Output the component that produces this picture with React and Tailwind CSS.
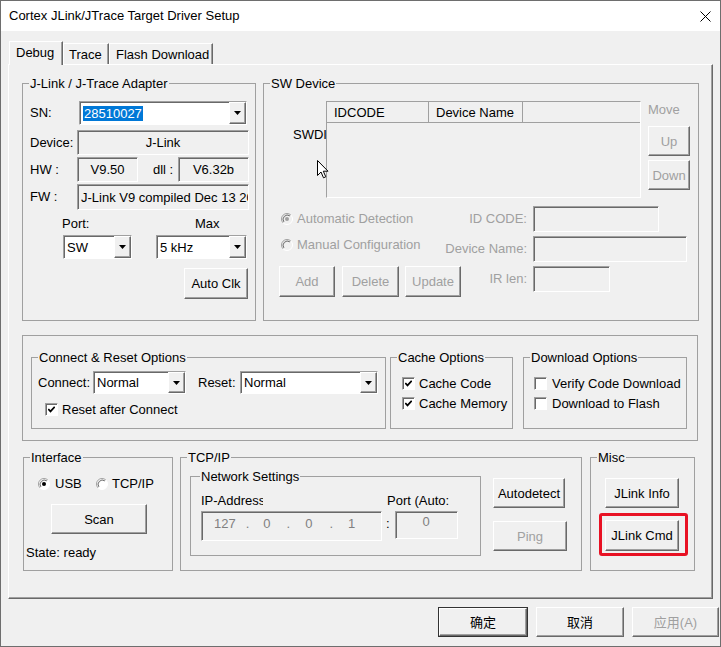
import React from "react";

const raised =
  "border border-t-white border-l-white border-r-[#696969] border-b-[#696969] shadow-[inset_-1px_-1px_0_#a0a0a0]";
const sunken =
  "border border-t-[#a0a0a0] border-l-[#a0a0a0] border-r-white border-b-white shadow-[inset_1px_1px_0_#696969]";

function Btn({ className = "", disabled, children }) {
  return (
    <div
      className={`${raised} bg-[#f0f0f0] flex items-center justify-center leading-[15px] shrink-0 ${
        disabled ? "text-[#a0a0a0]" : "text-black"
      } ${className}`}
    >
      {children}
    </div>
  );
}

function Arrow() {
  return (
    <svg width="7" height="4" viewBox="0 0 7 4">
      <path d="M0 0h7L3.5 4z" fill="#000" />
    </svg>
  );
}

function Combo({ className = "", children }) {
  return (
    <div className={`${sunken} bg-white flex items-stretch pl-[3px] shrink-0 ${className}`}>
      <div className="flex-1 flex items-center whitespace-nowrap overflow-hidden leading-[15px]">{children}</div>
      <div className={`${raised} bg-[#f0f0f0] w-[17px] flex items-center justify-center`}>
        <Arrow />
      </div>
    </div>
  );
}

function Field({ className = "", children }) {
  return <div className={`${sunken} bg-[#f0f0f0] leading-[15px] shrink-0 ${className}`}>{children}</div>;
}

function Check({ checked }) {
  return (
    <div className={`${sunken} bg-white w-[13px] h-[13px] flex items-center justify-center shrink-0`}>
      {checked && (
        <svg width="7" height="7" viewBox="0 0 7 7">
          <path d="M0.3 3l2.2 2.4L6.7 0.8" stroke="#000" strokeWidth="1.7" fill="none" />
        </svg>
      )}
    </div>
  );
}

function Radio({ checked, disabled }) {
  return (
    <svg width="12" height="12" viewBox="0 0 12 12" className="shrink-0">
      <circle cx="6" cy="6" r="5.5" fill={disabled ? "#f0f0f0" : "#fff"} />
      <path d="M2.1 9.9A5.5 5.5 0 0 1 9.9 2.1" stroke="#a0a0a0" fill="none" />
      <path d="M2.9 8.9A4.3 4.3 0 0 1 8.9 2.9" stroke="#696969" fill="none" />
      <path d="M9.9 2.1A5.5 5.5 0 0 1 2.1 9.9" stroke="#fff" fill="none" />
      {checked && <circle cx="6" cy="6" r="2" fill={disabled ? "#a0a0a0" : "#000"} />}
    </svg>
  );
}

function Group({ label, className = "", legend = "ml-[6px]", children }) {
  return (
    <fieldset className={`border border-[#a0a0a0] shrink-0 min-w-0 ${className}`}>
      <legend className={`${legend} px-[1px] leading-[15px]`}>{label}</legend>
      {children}
    </fieldset>
  );
}

function AdapterGroup() {
  return (
    <Group label="J-Link / J-Trace Adapter" className="w-[234px] h-[245px]">
      <div className="pl-[7px]">
        <div className="mt-[10px] flex items-center">
          <span className="w-[49px]">SN:</span>
          <Combo className="w-[168px] h-[24px]">
            <span className="bg-[#0078d7] text-white px-[1px]">28510027</span>
          </Combo>
        </div>
        <div className="mt-[5px] flex items-center">
          <span className="w-[47px]">Device:</span>
          <Field className="w-[172px] h-[25px] flex items-center justify-center">J-Link</Field>
        </div>
        <div className="mt-[2px] flex items-center">
          <span className="w-[47px]">HW :</span>
          <Field className="w-[61px] h-[25px] flex items-center justify-center">V9.50</Field>
          <span className="w-[40px] pl-[15px]">dll :</span>
          <Field className="w-[71px] h-[25px] flex items-center justify-center">V6.32b</Field>
        </div>
        <div className="mt-[2px] flex items-center">
          <span className="w-[47px]">FW :</span>
          <Field className="w-[172px] h-[26px] flex items-center pl-[3px] overflow-hidden whitespace-nowrap">
            J-Link V9 compiled Dec 13 2018 11:14:50
          </Field>
        </div>
        <div className="mt-[6px] flex leading-[15px]">
          <span className="ml-[32px] w-[133px]">Port:</span>
          <span>Max</span>
        </div>
        <div className="mt-[4px] flex">
          <Combo className="ml-[33px] w-[69px] h-[24px]">SW</Combo>
          <Combo className="ml-[24px] w-[91px] h-[24px]">5 kHz</Combo>
        </div>
        <Btn className="mt-[9px] ml-[154px] w-[64px] h-[31px]">Auto Clk</Btn>
      </div>
    </Group>
  );
}

function SwDeviceGroup() {
  return (
    <Group label="SW Device" className="w-[436px] h-[245px]">
      <div className="mt-[10px] flex">
        <div className="relative w-[62px] h-[97px] shrink-0">
          <div className="pl-[29px] mt-[26px] leading-[15px]">SWDI</div>
          <svg className="absolute left-[53px] top-[59px]" width="12" height="19" viewBox="0 0 12 19">
            <path d="M0.5 0.5V15.5L4 12L6.5 17.8L8.8 16.8L6.3 11.2H11Z" fill="#fff" stroke="#000" />
          </svg>
        </div>
        <div className="w-[315px] h-[97px] border border-t-[#a0a0a0] border-l-[#a0a0a0] border-r-white border-b-white bg-[#f0f0f0] shrink-0">
          <div className="flex h-[21px] border-b border-[#a0a0a0] leading-[15px]">
            <div className="w-[102px] border-r border-[#a0a0a0] pl-[7px] flex items-center">IDCODE</div>
            <div className="w-[94px] border-r border-[#a0a0a0] pl-[7px] flex items-center">Device Name</div>
            <div className="flex-1" />
          </div>
        </div>
        <div className="ml-[7px] w-[42px] flex flex-col shrink-0">
          <span className="mt-[1px] leading-[15px] text-[#a0a0a0]">Move</span>
          <Btn disabled className="mt-[9px] w-[42px] h-[30px]">Up</Btn>
          <Btn disabled className="mt-[4px] w-[42px] h-[30px]">Down</Btn>
        </div>
      </div>
      <div className="mt-[8px] flex items-center h-[26px] text-[#a0a0a0]">
        <div className="w-[265px] flex items-center">
          <span className="pl-[17px] flex items-center">
            <Radio checked disabled />
            <span className="ml-[4px]">Automatic Detection</span>
          </span>
          <span className="ml-auto pr-[2px]">ID CODE:</span>
        </div>
        <Field className="ml-[4px] w-[126px] h-[26px]" />
      </div>
      <div className="mt-[4px] flex items-center h-[26px] text-[#a0a0a0]">
        <div className="w-[265px] flex items-center">
          <span className="pl-[17px] flex items-center mb-[8px]">
            <Radio disabled />
            <span className="ml-[4px]">Manual Configuration</span>
          </span>
          <span className="ml-auto pr-[2px]">Device Name:</span>
        </div>
        <Field className="ml-[4px] w-[154px] h-[26px]" />
      </div>
      <div className="mt-[4px] flex items-start text-[#a0a0a0]">
        <div className="w-[265px] flex items-start">
          <Btn disabled className="ml-[15px] w-[56px] h-[31px]">Add</Btn>
          <Btn disabled className="ml-[7px] w-[57px] h-[31px]">Delete</Btn>
          <Btn disabled className="ml-[6px] w-[56px] h-[31px]">Update</Btn>
          <span className="ml-auto pr-[2px] h-[26px] flex items-center">IR len:</span>
        </div>
        <Field className="ml-[4px] w-[77px] h-[26px]" />
      </div>
    </Group>
  );
}

function OptionsBox() {
  return (
    <div className="mt-[14px] ml-[13px] w-[676px] h-[106px] border border-[#a0a0a0] flex pt-[14px] pl-[8px]">
      <Group label="Connect &amp; Reset Options" className="w-[355px] h-[79px]">
        <div className="mt-[6px] pl-[6px] flex items-center">
          <span className="w-[55px]">Connect:</span>
          <Combo className="w-[93px] h-[23px]">Normal</Combo>
          <span className="ml-[12px] w-[42px]">Reset:</span>
          <Combo className="w-[138px] h-[23px]">Normal</Combo>
        </div>
        <div className="mt-[8px] pl-[13px] flex items-center leading-[15px]">
          <Check checked />
          <span className="ml-[4px]">Reset after Connect</span>
        </div>
      </Group>
      <Group label="Cache Options" className="ml-[4px] w-[123px] h-[79px]">
        <div className="mt-[11px] pl-[11px] flex items-center leading-[15px]">
          <Check checked />
          <span className="ml-[4px]">Cache Code</span>
        </div>
        <div className="mt-[5px] pl-[11px] flex items-center leading-[15px]">
          <Check checked />
          <span className="ml-[4px] whitespace-nowrap">Cache Memory</span>
        </div>
      </Group>
      <Group label="Download Options" className="ml-[10px] w-[164px] h-[79px]">
        <div className="mt-[11px] pl-[10px] flex items-center leading-[15px]">
          <Check />
          <span className="ml-[5px] whitespace-nowrap">Verify Code Download</span>
        </div>
        <div className="mt-[5px] pl-[10px] flex items-center leading-[15px]">
          <Check />
          <span className="ml-[5px]">Download to Flash</span>
        </div>
      </Group>
    </div>
  );
}

function BottomRow() {
  return (
    <div className="mt-[9px] ml-[14px] flex">
      <Group label="Interface" className="w-[150px] h-[121px]">
        <div className="mt-[11px] pl-[14px] flex items-center leading-[15px]">
          <Radio checked />
          <span className="ml-[5px] w-[41px]">USB</span>
          <Radio />
          <span className="ml-[4px]">TCP/IP</span>
        </div>
        <Btn className="mt-[13px] ml-[27px] w-[96px] h-[30px]">Scan</Btn>
        <div className="mt-[11px] pl-[2px] leading-[15px]">State: ready</div>
      </Group>
      <Group label="TCP/IP" className="ml-[7px] w-[402px] h-[121px]">
        <div className="flex">
          <Group label="Network Settings" legend="ml-[9px]" className="mt-[4px] ml-[9px] w-[291px] h-[87px]">
            <div className="mt-[9px] flex leading-[15px]">
              <span className="ml-[10px] w-[62px] overflow-hidden whitespace-nowrap">IP-Address</span>
              <span className="ml-[124px] whitespace-nowrap">Port (Auto:</span>
            </div>
            <div className="mt-[3px] flex items-start">
              <Field className="ml-[10px] w-[181px] h-[30px] flex items-start pt-[4px] pl-[12px] text-[#808080]">
                <span>127</span>
                <span className="ml-[10px]">.</span>
                <span className="ml-[14px]">0</span>
                <span className="ml-[16px]">.</span>
                <span className="ml-[15px]">0</span>
                <span className="ml-[17px]">.</span>
                <span className="ml-[15px]">1</span>
              </Field>
              <span className="ml-[4px] mt-[5px] leading-[15px]">:</span>
              <Field className="ml-[5px] w-[63px] h-[28px] text-center pt-[2px] text-[#808080]">0</Field>
            </div>
          </Group>
          <div className="ml-[12px] mt-[13px] flex flex-col">
            <Btn className="w-[72px] h-[30px]">Autodetect</Btn>
            <Btn disabled className="mt-[13px] w-[74px] h-[30px]">Ping</Btn>
          </div>
        </div>
      </Group>
      <Group label="Misc" className="ml-[8px] w-[105px] h-[121px]">
        <Btn className="mt-[13px] ml-[14px] w-[74px] h-[30px]">JLink Info</Btn>
        <div className="mt-[5px] ml-[8px] w-[89px] h-[43px] border-[3px] border-[#e81123] rounded-[3px] pl-[3px] pt-[4px]">
          <Btn className="w-[74px] h-[31px]">JLink Cmd</Btn>
        </div>
      </Group>
    </div>
  );
}

export default function App() {
  return (
    <div className="w-[721px] h-[647px] border border-[#6e6e6e] bg-[#f0f0f0] text-black text-[13px] font-['Liberation_Sans','Noto_Sans_CJK_SC',sans-serif] flex flex-col overflow-hidden">
      <div className="h-[30px] bg-white flex items-center justify-between pl-[8px] pr-[9px] shrink-0">
        <span>Cortex JLink/JTrace Target Driver Setup</span>
        <svg width="11" height="11" viewBox="0 0 11 11">
          <path d="M0.5 0.5L10.5 10.5M10.5 0.5L0.5 10.5" stroke="#000" strokeWidth="1" />
        </svg>
      </div>
      <div className="pl-[7px] pt-[10px]">
        <div className="flex items-end h-[23px] ml-[1px]">
          <div className={`relative z-10 -mb-[1px] h-[24px] w-[54px] bg-[#f0f0f0] border-t border-l border-r border-t-white border-l-white border-r-[#696969] shadow-[inset_-1px_0_0_#a0a0a0] pl-[6px] pt-[3px] leading-[15px]`}>
            Debug
          </div>
          <div className="h-[21px] w-[46px] border-t border-l border-r border-t-white border-l-white border-r-[#696969] shadow-[inset_-1px_0_0_#a0a0a0] pl-[5px] pt-[3px] leading-[15px]">
            Trace
          </div>
          <div className="h-[21px] w-[104px] border-t border-l border-r border-t-white border-l-white border-r-[#696969] shadow-[inset_-1px_0_0_#a0a0a0] pl-[6px] pt-[3px] leading-[15px]">
            Flash Download
          </div>
        </div>
        <div className={`w-[705px] h-[535px] ${raised} flex flex-col`}>
          <div className="mt-[11px] ml-[13px] flex gap-[7px]">
            <AdapterGroup />
            <SwDeviceGroup />
          </div>
          <OptionsBox />
          <BottomRow />
        </div>
      </div>
      <div className="mt-[8px] flex justify-end gap-[8px] pr-[1px]">
        <div className="border border-[#333] w-[90px] h-[30px] flex">
          <Btn className="flex-1">确定</Btn>
        </div>
        <Btn className="w-[88px] h-[30px]">取消</Btn>
        <Btn disabled className="w-[87px] h-[30px]">应用(A)</Btn>
      </div>
    </div>
  );
}
